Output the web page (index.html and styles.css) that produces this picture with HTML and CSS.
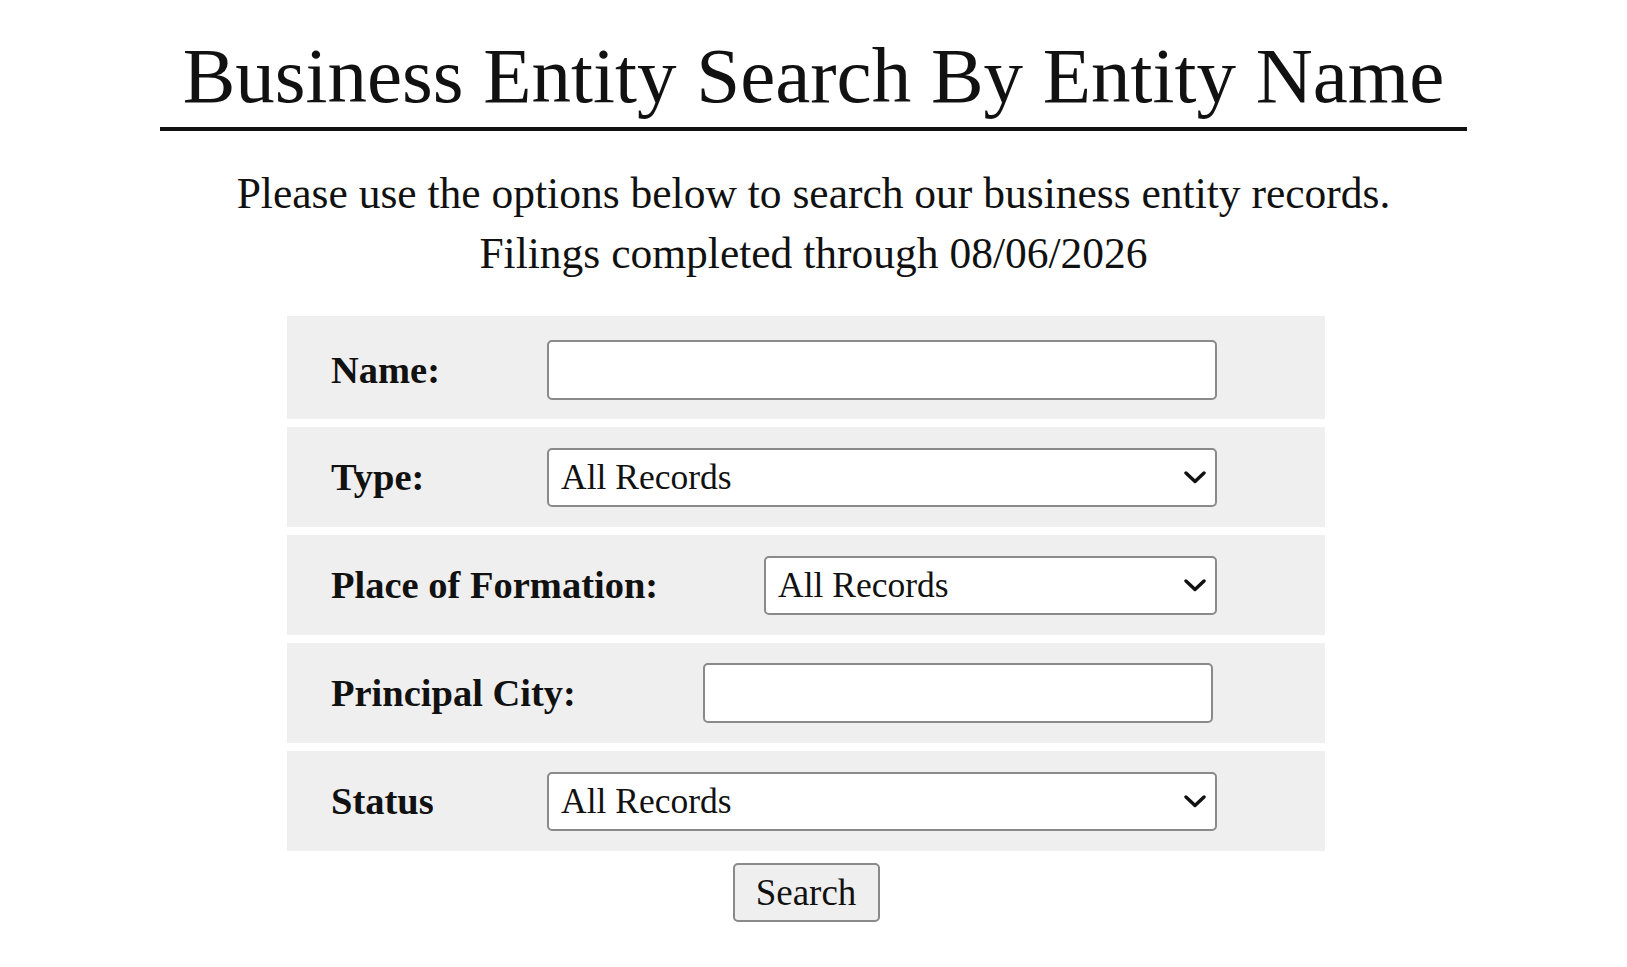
FILE: index.html
```html
<!DOCTYPE html>
<html lang="en">
<head>
<meta charset="utf-8">
<title>Business Entity Search By Entity Name</title>
<link rel="stylesheet" href="styles.css">
</head>
<body>
<header class="page-header">
  <h1 class="page-title">Business Entity Search By Entity Name</h1>
</header>
<p class="intro">Please use the options below to search our business entity records.<br>Filings completed through 08/06/2026</p>
<div class="form-wrap">
  <form class="search-form">
    <div class="rows">
      <div class="row row-first">
        <label class="label" for="name">Name:</label>
        <input class="control control-text w-full" id="name" type="text">
      </div>
      <div class="row">
        <label class="label" for="type">Type:</label>
        <div class="select-wrap w-full">
          <select class="control control-select" id="type"><option>All Records</option></select>
          <svg class="chevron" viewBox="0 0 22 13" width="22" height="13" aria-hidden="true"><path d="M2 2 L11 10.5 L20 2" fill="none" stroke="#111" stroke-width="3.4" stroke-linecap="round" stroke-linejoin="round"/></svg>
        </div>
      </div>
      <div class="row">
        <label class="label" for="place">Place of Formation:</label>
        <div class="select-wrap w-place">
          <select class="control control-select" id="place"><option>All Records</option></select>
          <svg class="chevron" viewBox="0 0 22 13" width="22" height="13" aria-hidden="true"><path d="M2 2 L11 10.5 L20 2" fill="none" stroke="#111" stroke-width="3.4" stroke-linecap="round" stroke-linejoin="round"/></svg>
        </div>
      </div>
      <div class="row">
        <label class="label" for="city">Principal City:</label>
        <input class="control control-text w-city" id="city" type="text">
      </div>
      <div class="row">
        <label class="label" for="status">Status</label>
        <div class="select-wrap w-full">
          <select class="control control-select" id="status"><option>All Records</option></select>
          <svg class="chevron" viewBox="0 0 22 13" width="22" height="13" aria-hidden="true"><path d="M2 2 L11 10.5 L20 2" fill="none" stroke="#111" stroke-width="3.4" stroke-linecap="round" stroke-linejoin="round"/></svg>
        </div>
      </div>
    </div>
    <div class="actions">
      <button class="btn" type="button">Search</button>
    </div>
  </form>
</div>
</body>
</html>
```

FILE: styles.css
```css
html, body {
  margin: 0;
  padding: 0;
  background: #ffffff;
}

body {
  font-family: "Liberation Serif", "Times New Roman", serif;
  color: #111111;
}

.page-header {
  text-align: center;
  padding-top: 31px;
}

.page-title {
  display: inline-block;
  margin: 0;
  padding: 0 23px 6px;
  font-size: 79px;
  font-weight: normal;
  line-height: 90px;
  border-bottom: 4px solid #111111;
}

.intro {
  margin: 32px 0 0;
  text-align: center;
  font-size: 43.5px;
  line-height: 60px;
}

.form-wrap {
  padding-right: 15px;
  margin-top: 33px;
}

.search-form {
  width: 1038px;
  margin: 0 auto;
}

.rows {
  display: flex;
  flex-direction: column;
  gap: 8px;
}

.row {
  box-sizing: border-box;
  display: flex;
  align-items: center;
  height: 100px;
  padding: 0 108px 0 44px;
  background: #efefef;
}

.row-first {
  height: 103px;
  padding-top: 4px;
}

.label {
  font-size: 38.5px;
  font-weight: bold;
  white-space: nowrap;
}

.control {
  box-sizing: border-box;
  border: 2px solid #8a8a8a;
  border-radius: 5px;
  background: #ffffff;
  font-family: "Liberation Serif", "Times New Roman", serif;
  color: #111111;
  margin: 0;
}

.control-text {
  height: 60px;
  padding: 0 12px;
  font-size: 35px;
  margin-left: auto;
}

.select-wrap {
  position: relative;
  margin-left: auto;
  height: 59px;
}

.control-select {
  appearance: none;
  -webkit-appearance: none;
  width: 100%;
  height: 59px;
  padding: 0 44px 0 12px;
  font-size: 35.5px;
}

.chevron {
  position: absolute;
  right: 11px;
  top: 23px;
  pointer-events: none;
}

.w-full {
  width: 670px;
}

.w-place {
  width: 453px;
}

.w-city {
  width: 510px;
  margin-right: 4px;
}

.actions {
  display: flex;
  justify-content: center;
  margin-top: 12px;
}

.btn {
  box-sizing: border-box;
  width: 147px;
  height: 59px;
  border: 2px solid #8a8a8a;
  border-radius: 5px;
  background: #efefef;
  font-family: "Liberation Serif", "Times New Roman", serif;
  font-size: 37px;
  color: #111111;
  padding: 0;
}
```
